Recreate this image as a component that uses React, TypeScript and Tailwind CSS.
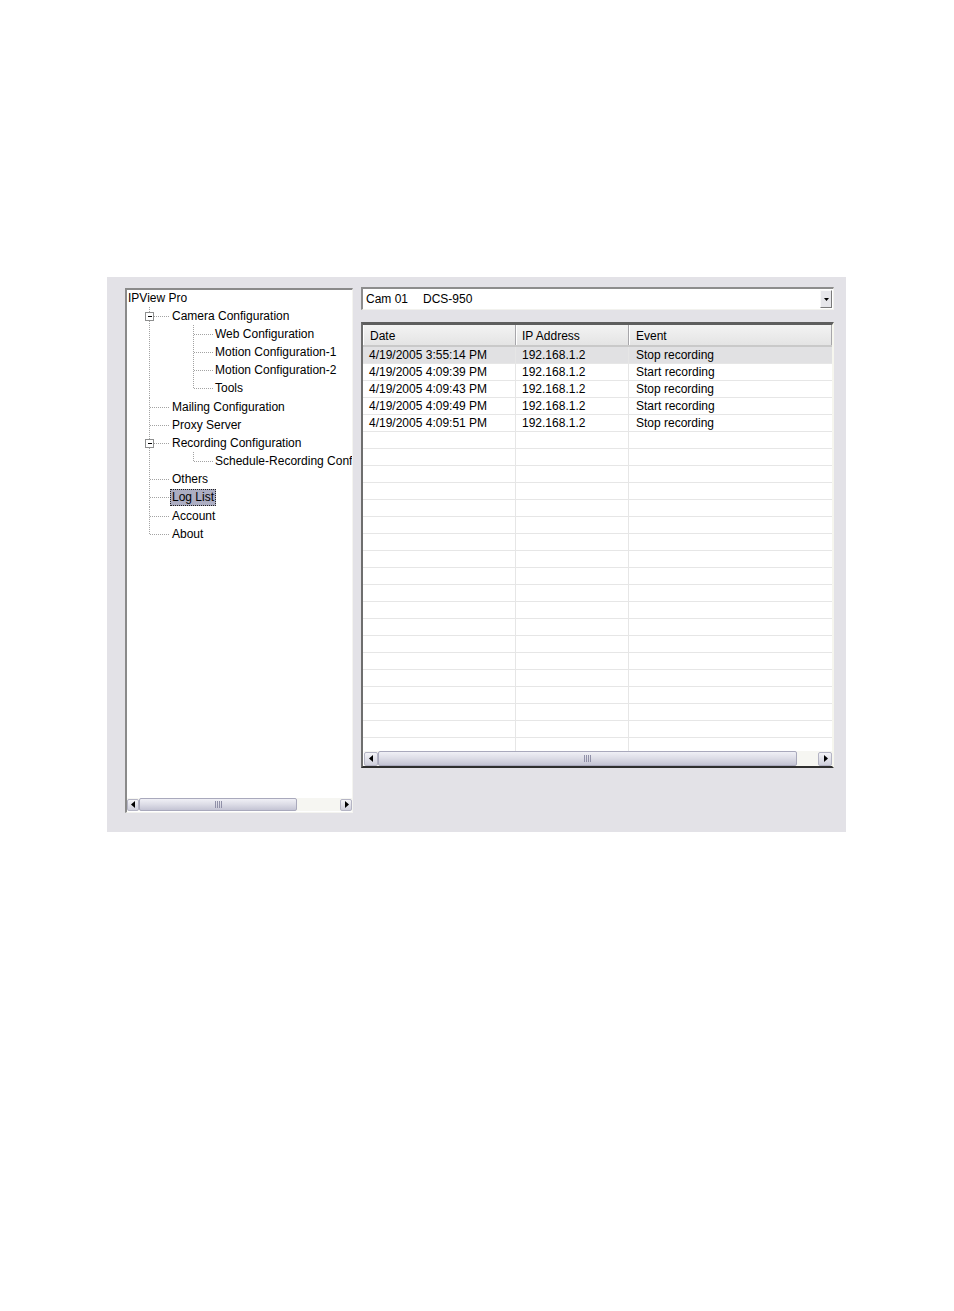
import React from "react";

type Node = {
  label: string;
  level: 0 | 1 | 2;
  expander?: boolean;
  lastL1?: boolean;
  firstChild?: boolean;
  lastChild?: boolean;
  selected?: boolean;
  tall?: boolean;
};

const nodes: Node[] = [
  { label: "IPView Pro", level: 0 },
  { label: "Camera Configuration", level: 1, expander: true },
  { label: "Web Configuration", level: 2, firstChild: true },
  { label: "Motion Configuration-1", level: 2 },
  { label: "Motion Configuration-2", level: 2 },
  { label: "Tools", level: 2, lastChild: true, tall: true },
  { label: "Mailing Configuration", level: 1 },
  { label: "Proxy Server", level: 1 },
  { label: "Recording Configuration", level: 1, expander: true },
  { label: "Schedule-Recording Configuration", level: 2, firstChild: true, lastChild: true },
  { label: "Others", level: 1 },
  { label: "Log List", level: 1, selected: true, tall: true },
  { label: "Account", level: 1 },
  { label: "About", level: 1, lastL1: true },
];

const LINE = "#a3a3a3";

function Connector({ n }: { n: Node }) {
  if (n.level === 0) return null;
  const w = n.level === 1 ? 43 : 86;
  const h = n.tall ? 19 : 18;
  return (
    <svg width={w} height={h} className="shrink-0" shapeRendering="crispEdges">
      <line x1={22.5} y1={0} x2={22.5} y2={n.lastL1 ? 9 : h} stroke={LINE} strokeDasharray="1 1" />
      {n.level === 1 && (
        <>
          {n.expander ? (
            <>
              <line x1={27} y1={9.5} x2={43} y2={9.5} stroke={LINE} strokeDasharray="1 1" />
              <rect x={18.5} y={5.5} width={8} height={8} fill="#ffffff" stroke="#8e8f8f" />
              <line x1={20.5} y1={9.5} x2={25} y2={9.5} stroke="#000000" />
            </>
          ) : (
            <line x1={23} y1={9.5} x2={43} y2={9.5} stroke={LINE} strokeDasharray="1 1" />
          )}
        </>
      )}
      {n.level === 2 && (
        <>
          <line x1={66.5} y1={0} x2={66.5} y2={n.lastChild ? 9 : h} stroke={LINE} strokeDasharray="1 1" />
          <line x1={67} y1={9.5} x2={86} y2={9.5} stroke={LINE} strokeDasharray="1 1" />
        </>
      )}
    </svg>
  );
}

function Arrow({ dir }: { dir: "left" | "right" }) {
  return (
    <svg width={5} height={7} viewBox="0 0 5 7">
      {dir === "left" ? (
        <polygon points="4,0 4,7 0,3.5" fill="#000" />
      ) : (
        <polygon points="1,0 1,7 5,3.5" fill="#000" />
      )}
    </svg>
  );
}

function ScrollButton({ dir, size }: { dir: "left" | "right"; size: number }) {
  return (
    <div
      className="shrink-0 flex items-center justify-center rounded-[2px] border border-[#b4b4c4] bg-gradient-to-b from-[#f4f4f8] to-[#cfcfdc]"
      style={{ width: size, height: size }}
    >
      <Arrow dir={dir} />
    </div>
  );
}

function Scrollbar({ thumb, height }: { thumb: number; height: number }) {
  return (
    <div className="flex items-center bg-[#f6f6f2]" style={{ height }}>
      <ScrollButton dir="left" size={height - 1} />
      <div
        className="shrink-0 h-full flex items-center justify-center rounded-[2px] border border-[#a9a9bc] bg-gradient-to-b from-[#f0f0f6] via-[#dcdce6] to-[#c4c4d4]"
        style={{ width: thumb }}
      >
        <div className="flex gap-[1px]">
          <div className="w-[1px] h-[7px] bg-[#9090a8]" />
          <div className="w-[1px] h-[7px] bg-[#9090a8]" />
          <div className="w-[1px] h-[7px] bg-[#9090a8]" />
          <div className="w-[1px] h-[7px] bg-[#9090a8]" />
        </div>
      </div>
      <div className="flex-1" />
      <ScrollButton dir="right" size={height - 1} />
    </div>
  );
}

function Tree() {
  return (
    <div className="w-[228px] h-[525px] shrink-0 flex flex-col border-t-2 border-l-2 border-r border-b border-t-[#8a8a8a] border-l-[#8a8a8a] border-r-[#f4f4f0] border-b-[#f4f4f0] bg-white">
      <div className="flex-1 overflow-hidden -mt-[1px]">
        {nodes.map((n, i) => (
          <div
            key={i}
            className={`${n.tall ? "h-[19px] items-start" : "h-[18px] items-center"} flex whitespace-nowrap`}
          >
            <Connector n={n} />
            <span
              className={
                n.selected
                  ? "mt-[1px] px-[1px] h-[17px] leading-[15px] bg-[#acadc2] border border-dotted border-[#222]"
                  : n.level === 0
                  ? "ml-[1px] leading-[18px]"
                  : "ml-[2px] leading-[18px]"
              }
            >
              {n.label}
            </span>
          </div>
        ))}
      </div>
      <div className="pb-[1px]">
        <Scrollbar thumb={158} height={13} />
      </div>
    </div>
  );
}

const rows = [
  ["4/19/2005 3:55:14 PM", "192.168.1.2", "Stop recording"],
  ["4/19/2005 4:09:39 PM", "192.168.1.2", "Start recording"],
  ["4/19/2005 4:09:43 PM", "192.168.1.2", "Stop recording"],
  ["4/19/2005 4:09:49 PM", "192.168.1.2", "Start recording"],
  ["4/19/2005 4:09:51 PM", "192.168.1.2", "Stop recording"],
];

function HeaderCell({ label, w, pl }: { label: string; w: number; pl: number }) {
  return (
    <div
      className="h-full flex items-center pt-[2px] border-r border-r-[#a7a6aa] shadow-[inset_1px_0_0_#ffffff]"
      style={{ width: w, paddingLeft: pl }}
    >
      {label}
    </div>
  );
}

function Table() {
  const empty = Array.from({ length: 19 });
  const allRows = [...rows.map((r) => r as string[] | null), ...empty.map(() => null)];
  return (
    <div className="h-[446px] mt-[12px] flex flex-col border-t-[3px] border-l-2 border-r-2 border-b-2 border-t-[#5e5e5e] border-l-[#6e6e6e] border-r-[#f6f6ee] border-b-[#2e2e2e] bg-white">
      <div className="h-[22px] flex bg-gradient-to-b from-[#f3f3f3] to-[#e4e4e4] border-b-2 border-b-[#c9c9c9]">
        <HeaderCell label="Date" w={153} pl={7} />
        <HeaderCell label="IP Address" w={113} pl={6} />
        <HeaderCell label="Event" w={203} pl={7} />
      </div>
      <div className="flex-1 overflow-hidden">
        {allRows.map((r, i) => (
          <div
            key={i}
            className={`h-[17px] flex border-b border-b-[#e6e6e6] ${i === 0 ? "bg-[#e1e1e3]" : ""}`}
          >
            <div className="w-[153px] pl-[6px] leading-[16px] border-r border-r-[#e6e6e6]">{r ? r[0] : ""}</div>
            <div className="w-[113px] pl-[6px] leading-[16px] border-r border-r-[#e6e6e6]">{r ? r[1] : ""}</div>
            <div className="w-[203px] pl-[7px] leading-[16px]">{r ? r[2] : ""}</div>
          </div>
        ))}
      </div>
      <div className="pl-[1px]">
        <Scrollbar thumb={419} height={15} />
      </div>
    </div>
  );
}

function Combo() {
  return (
    <div className="h-[23px] -mt-[1px] flex items-center border-t-2 border-l-2 border-r border-b border-t-[#8d8d8d] border-l-[#8d8d8d] border-r-[#f2f2ee] border-b-[#f2f2ee] bg-white">
      <div className="flex-1 pl-[3px] flex">
        <span className="w-[57px]">Cam 01</span>
        <span>DCS-950</span>
      </div>
      <div className="w-[12px] h-[18px] mr-[1px] flex items-center justify-center bg-[#e6e6ea] border border-t-[#f8f8f8] border-l-[#f8f8f8] border-r-[#7a7a7a] border-b-[#7a7a7a]">
        <svg width={5} height={3} viewBox="0 0 5 3">
          <polygon points="0,0 5,0 2.5,3" fill="#000" />
        </svg>
      </div>
    </div>
  );
}

export default function App() {
  return (
    <div
      className="w-[954px] h-[1311px] bg-white pt-[277px] pl-[107px] text-[12px] text-black"
      style={{ fontFamily: '"Liberation Sans", Arial, sans-serif' }}
    >
      <div className="w-[739px] h-[555px] bg-[#e3e2e7] flex pl-[18px] pt-[11px] gap-[8px]">
        <Tree />
        <div className="w-[473px] flex flex-col">
          <Combo />
          <Table />
        </div>
      </div>
    </div>
  );
}
